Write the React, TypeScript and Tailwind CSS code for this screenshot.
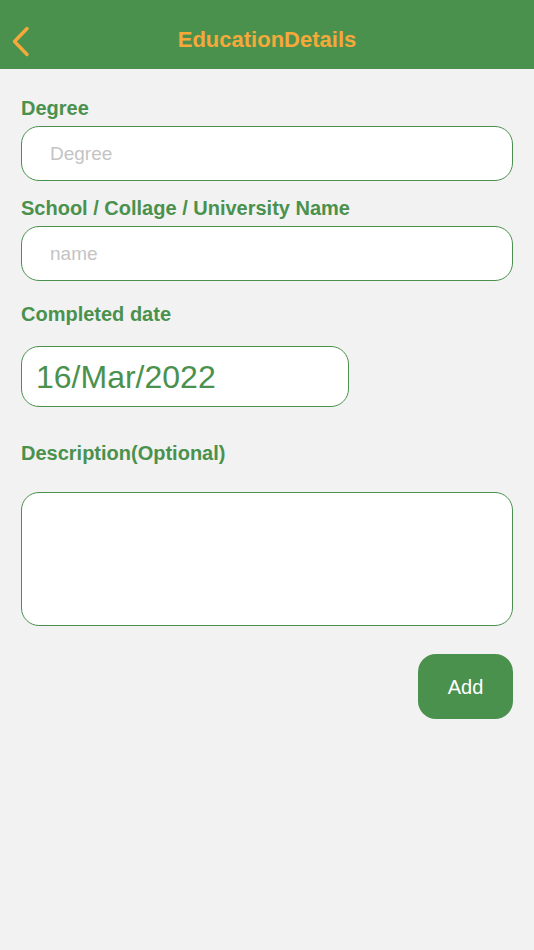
import { useState } from 'react';

const font = { fontFamily: '"Liberation Sans", Arial, sans-serif' };

function Label({ text, className = '' }: { text: string; className?: string }): JSX.Element {
  return <div className={`h-[24px] text-[20px] font-bold leading-[24px] text-[#4a914e] ${className}`}>{text}</div>;
}

export default function App(): JSX.Element {
  const [degree, setDegree] = useState('');
  const [name, setName] = useState('');
  const [description, setDescription] = useState('');

  return (
    <div className="min-h-[950px] w-full bg-[#f2f2f2]" style={font}>
      <header className="relative flex h-[69px] items-center justify-center bg-[#4a914e]">
        <button type="button" className="absolute left-[9px] top-[24px] p-[2px]" aria-label="Back">
          <svg width="20" height="31" viewBox="0 0 20 31" fill="none">
            <path d="M16 2.5 L3.5 15.5 L16 28.5" stroke="#f5a93a" strokeWidth="3.4" strokeLinecap="round" strokeLinejoin="round" />
          </svg>
        </button>
        <h1 className="pt-[10px] text-[22px] font-bold text-[#f5a93a]">EducationDetails</h1>
      </header>

      <main className="flex flex-col px-[21px] pt-[27px]">
        <Label text="Degree" />
        <input
          value={degree}
          onChange={(e) => setDegree(e.target.value)}
          placeholder="Degree"
          className="mt-[6px] h-[55px] w-full rounded-[18px] border border-[#4a914e] bg-white px-[28px] text-[19px] text-[#333] outline-none placeholder:text-[#c4c4c4]"
        />

        <Label text="School / Collage / University Name" className="mt-[15px]" />
        <input
          value={name}
          onChange={(e) => setName(e.target.value)}
          placeholder="name"
          className="mt-[6px] h-[55px] w-full rounded-[18px] border border-[#4a914e] bg-white px-[28px] text-[19px] text-[#333] outline-none placeholder:text-[#c4c4c4]"
        />

        <Label text="Completed date" className="mt-[21px]" />
        <div className="mt-[20px] flex h-[61px] w-[328px] items-center rounded-[18px] border border-[#4a914e] bg-white px-[14px] text-[32px] text-[#4a914e]">
          16/Mar/2022
        </div>

        <Label text="Description(Optional)" className="mt-[34px]" />
        <textarea
          value={description}
          onChange={(e) => setDescription(e.target.value)}
          className="mt-[27px] h-[134px] w-full resize-none rounded-[18px] border border-[#4a914e] bg-white p-[14px] text-[18px] text-[#333] outline-none"
        />

        <div className="mt-[28px] flex justify-end">
          <button
            type="button"
            className="h-[65px] w-[95px] rounded-[18px] bg-[#4a914e] text-[20px] text-white"
          >
            Add
          </button>
        </div>
      </main>
    </div>
  );
}
